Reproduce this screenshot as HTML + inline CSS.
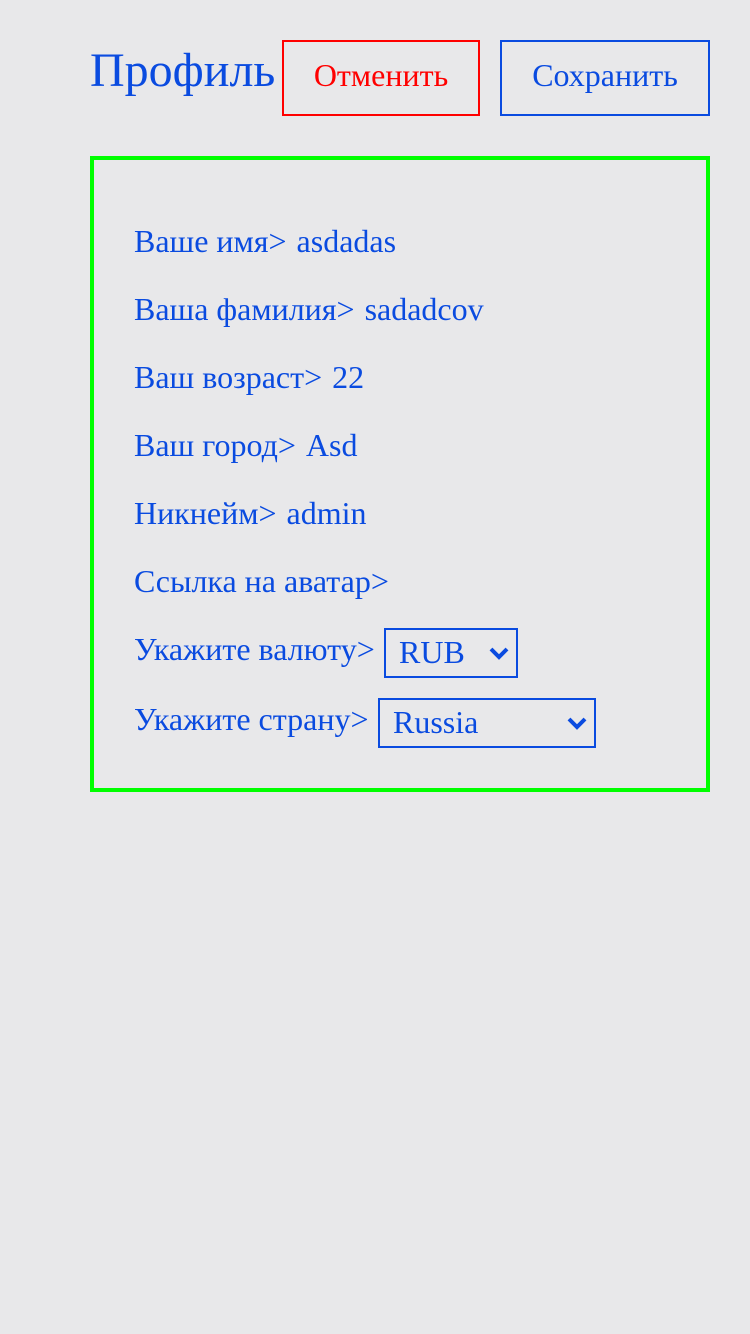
<!DOCTYPE html>
<html><head><meta charset="utf-8"><style>
body{margin:0;width:750px;height:1334px;background:#e8e8ea;font-family:"Liberation Serif",serif;color:#0a4be0;position:relative;overflow:hidden}
.a{position:absolute;white-space:nowrap}
.btn{position:absolute;box-sizing:border-box;border:2px solid;font-size:32px;display:flex;align-items:center;justify-content:center;padding-bottom:5px}
.row{position:absolute;left:134px;font-size:32px;line-height:40px;white-space:nowrap}
.row b{font-weight:normal;margin-left:2px}
.sel{position:absolute;box-sizing:border-box;border:2px solid #0a4be0;font-size:32px;line-height:44px;padding-left:13px}
.sel svg{position:absolute;right:5px;top:15px}
</style></head><body>
<div class="a" style="left:90px;top:41px;font-size:48px;line-height:60px">Профиль</div>
<div class="btn" style="left:282px;top:40px;width:198px;height:76px;color:#f00;border-color:#f00">Отменить</div>
<div class="btn" style="left:500px;top:40px;width:210px;height:76px;border-color:#0a4be0">Сохранить</div>
<div class="a" style="left:90px;top:156px;width:620px;height:636px;box-sizing:border-box;border:4px solid #00ff00"></div>
<div class="row" style="top:221px">Ваше имя&gt; <b>asdadas</b></div>
<div class="row" style="top:289px">Ваша фамилия&gt; <b>sadadcov</b></div>
<div class="row" style="top:357px">Ваш возраст&gt; <b>22</b></div>
<div class="row" style="top:425px">Ваш город&gt; <b>Asd</b></div>
<div class="row" style="top:493px">Никнейм&gt; <b>admin</b></div>
<div class="row" style="top:561px">Ссылка на аватар&gt;</div>
<div class="row" style="top:629px">Укажите валюту&gt;</div>
<div class="row" style="top:699px">Укажите страну&gt;</div>
<div class="sel" style="left:384px;top:628px;width:134px;height:50px">RUB<svg width="24" height="16" viewBox="0 0 24 16"><path d="M4 4l8 8 8-8" fill="none" stroke="#0a4be0" stroke-width="4"/></svg></div>
<div class="sel" style="left:378px;top:698px;width:218px;height:50px">Russia<svg width="24" height="16" viewBox="0 0 24 16"><path d="M4 4l8 8 8-8" fill="none" stroke="#0a4be0" stroke-width="4"/></svg></div>
</body></html>
